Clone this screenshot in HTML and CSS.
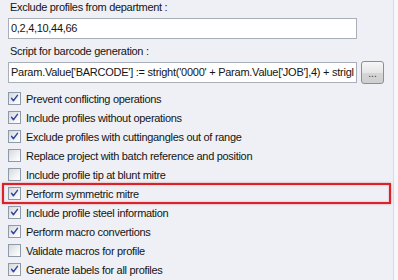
FILE: index.html
```html
<!DOCTYPE html>
<html lang="en">
<head>
    <meta charset="UTF-8">
    <title>Export options</title>
    <link rel="stylesheet" href="styles.css">
</head>
<body>
    <main class="options-panel">
        <div class="field-label">Exclude profiles from department :</div>
        <div class="field-row">
            <div class="textbox">0,2,4,10,44,66</div>
        </div>

        <div class="field-label spaced">Script for barcode generation :</div>
        <div class="field-row">
            <div class="textbox script">Param.Value['BARCODE'] := stright('0000' + Param.Value['JOB'],4) + strigl</div>
            <button class="browse-button">...</button>
        </div>

        <ul class="check-list">
            <li class="check-item checked"><span class="box"><svg viewBox="0 0 13 13"><path d="M3 6.2 L5.2 9.2 L10 2.8"/></svg></span>Prevent conflicting operations</li>
            <li class="check-item checked"><span class="box"><svg viewBox="0 0 13 13"><path d="M3 6.2 L5.2 9.2 L10 2.8"/></svg></span>Include profiles without operations</li>
            <li class="check-item checked"><span class="box"><svg viewBox="0 0 13 13"><path d="M3 6.2 L5.2 9.2 L10 2.8"/></svg></span>Exclude profiles with cuttingangles out of range</li>
            <li class="check-item"><span class="box"></span>Replace project with batch reference and position</li>
            <li class="check-item"><span class="box"></span>Include profile tip at blunt mitre</li>
            <li class="check-item checked highlighted"><span class="box"><svg viewBox="0 0 13 13"><path d="M3 6.2 L5.2 9.2 L10 2.8"/></svg></span>Perform symmetric mitre</li>
            <li class="check-item checked"><span class="box"><svg viewBox="0 0 13 13"><path d="M3 6.2 L5.2 9.2 L10 2.8"/></svg></span>Include profile steel information</li>
            <li class="check-item checked"><span class="box"><svg viewBox="0 0 13 13"><path d="M3 6.2 L5.2 9.2 L10 2.8"/></svg></span>Perform macro convertions</li>
            <li class="check-item"><span class="box"></span>Validate macros for profile</li>
            <li class="check-item checked"><span class="box"><svg viewBox="0 0 13 13"><path d="M3 6.2 L5.2 9.2 L10 2.8"/></svg></span>Generate labels for all profiles</li>
        </ul>
    </main>
    <div class="side-edge"></div>
</body>
</html>
```
FILE: styles.css
```css
/* --- Base --- */
:root {
    --font-ui: 'Liberation Sans', Arial, sans-serif;
    --color-bg: #eef0f5;
    --color-text: #141414;
    --color-field-border: #a9afb8;
    --color-check: #34479a;
    --color-mark: #d9232b;
}
* { box-sizing: border-box; }
html, body { height: 100%; }
body {
    margin: 0;
    display: flex;
    background-color: var(--color-bg);
    font-family: var(--font-ui);
    font-size: 11px;
    letter-spacing: -0.3px;
    color: var(--color-text);
    overflow: hidden;
}

/* --- Panel --- */
.options-panel {
    width: 393px;
    padding: 0 0 0 8px;
}
.field-label { height: 18px; line-height: 14px; padding-left: 2px; }
.field-label.spaced { margin-top: 5px; height: 17px; }
.field-row { display: flex; align-items: center; gap: 4px; }
.textbox {
    width: 349px;
    height: 21px;
    line-height: 19px;
    padding: 0 2px;
    border: 1px solid var(--color-field-border);
    background-color: #fff;
    white-space: nowrap;
    overflow: hidden;
}
.textbox.script { letter-spacing: -0.25px; }
.browse-button {
    width: 23px;
    height: 23px;
    padding: 0 0 4px;
    border: 1px solid #8a8f96;
    border-radius: 3px;
    background: linear-gradient(#f6f6f6, #e6e6e6 50%, #d6d6d6 51%, #cfcfcf);
    font-family: var(--font-ui);
    font-size: 10px;
    line-height: 10px;
    color: #333;
    display: flex;
    align-items: flex-end;
    justify-content: center;
}

/* --- Checkboxes --- */
.check-list { list-style: none; margin: 5px 0 0; padding: 0; }
.check-item { display: flex; align-items: center; gap: 5px; height: 19px; position: relative; }
.check-item .box {
    width: 13px;
    height: 13px;
    flex: none;
    border: 1px solid #8e9aa8;
    background: linear-gradient(135deg, #d4d8de, #f3f4f6 65%, #fff);
    display: flex;
}
.check-item .box svg { width: 11px; height: 11px; }
.check-item .box path { fill: none; stroke: var(--color-check); stroke-width: 1.7; stroke-linecap: round; stroke-linejoin: round; }
.check-item.highlighted::before {
    content: "";
    position: absolute;
    left: -6px;
    right: 2px;
    top: -1px;
    bottom: -1px;
    border: 2px solid var(--color-mark);
    box-shadow: 0 0 2px rgba(217, 35, 43, 0.5), inset 0 0 2px rgba(217, 35, 43, 0.4);
}

/* --- Right edge --- */
.side-edge { flex: 1; border-left: 1px solid #d6dae1; background-color: #f6f7fa; }
```
